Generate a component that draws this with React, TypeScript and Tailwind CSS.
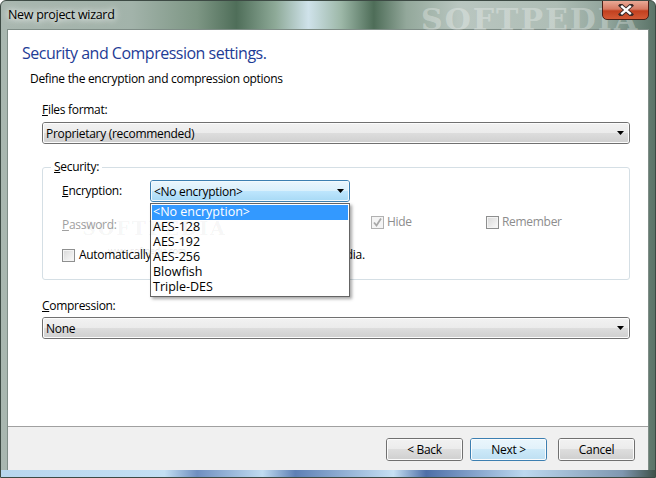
import React from "react";

function Arrow() {
  return (
    <svg width="7" height="4" viewBox="0 0 7 4" className="absolute right-[5px] top-1/2 -translate-y-1/2">
      <polygon points="0,0 7,0 3.5,4" fill="#000" />
    </svg>
  );
}

function Combo({ text, className }: { text: string; className: string }) {
  return (
    <div
      className={`relative h-[22px] rounded-[3px] border border-[#707070] bg-[linear-gradient(180deg,#f2f2f2_0%,#ebebeb_50%,#dddddd_50%,#cfcfcf_100%)] flex items-center pl-[3px] ${className}`}
    >
      <span className="shadow-[inset_0_0_0_1px_#fcfcfc] absolute inset-0 rounded-[2px]" />
      <span className="relative mt-[1px]">{text}</span>
      <Arrow />
    </div>
  );
}

function Check({ checked, disabled }: { checked?: boolean; disabled?: boolean }) {
  return (
    <span
      className={
        disabled
          ? "relative inline-block shrink-0 w-[13px] h-[13px] border border-[#b1b1b1] bg-[#f4f4f4]"
          : "relative inline-block shrink-0 w-[13px] h-[13px] border border-[#8e8f8f] bg-[linear-gradient(135deg,#d8d8d8_0%,#fbfbfb_100%)] shadow-[inset_0_0_0_1px_#f4f4f4]"
      }
    >
      {checked && (
        <svg width="11" height="11" viewBox="0 0 11 11" className="absolute left-0 top-0">
          <path d="M2 5.5 L4.5 8.5 L9 1.5" stroke="#a8a8a8" strokeWidth="1.8" fill="none" />
        </svg>
      )}
    </span>
  );
}

function Button({ text, focused }: { text: string; focused?: boolean }) {
  return (
    <div
      className={
        focused
          ? "relative w-[77px] h-[23px] rounded-[3px] border border-[#3c7fb1] bg-[linear-gradient(180deg,#eaf6fd_0%,#e1f1fa_50%,#cde9f8_50%,#bedff2_100%)] flex items-center justify-center"
          : "relative w-[77px] h-[23px] rounded-[3px] border border-[#707070] bg-[linear-gradient(180deg,#f2f2f2_0%,#ebebeb_50%,#dddddd_50%,#cfcfcf_100%)] flex items-center justify-center"
      }
    >
      <span className="absolute inset-0 rounded-[2px] shadow-[inset_0_0_0_1px_#fbfbfb]" />
      <span className="relative">{text}</span>
    </div>
  );
}

export default function App() {
  const items = ["AES-128", "AES-192", "AES-256", "Blowfish", "Triple-DES"];
  return (
    <div className="relative w-[656px] h-[478px] overflow-hidden rounded-t-[6px] border border-[#3d4a44] bg-[linear-gradient(90deg,#a9b7b0_0%,#a2b3aa_20%,#7d9684_30%,#4f6e59_36%,#8eaa98_42%,#cfe2ea_47%,#9db8a8_52%,#4e6d58_57%,#93a89b_62%,#b9c6c0_70%,#aebdb5_85%,#8fa39a_93%,#5b7468_100%)] font-['Open_Sans','Noto_Sans',sans-serif] text-[12px] tracking-[-0.3px] text-black">
      {/* title bar */}
      <div className="relative h-[28px] flex items-center pl-[7px]">
        <span className="text-[12.5px] [text-shadow:0_0_6px_#ffffff,0_0_10px_#ffffff]">New project wizard</span>
        <span className="absolute left-[420px] top-[-4px] text-[30px] font-bold tracking-[2px] text-white/30 font-['DejaVu_Serif',serif]">SOFTPEDIA</span>
        <div className="absolute right-[6px] top-[-1px] w-[47px] h-[20px] rounded-b-[5px] border border-[#4b1f16] bg-[linear-gradient(180deg,#e9a996_0%,#d67a63_45%,#c2401f_55%,#d35a36_100%)] flex items-center justify-center">
          <svg width="16" height="12" viewBox="0 0 16 12">
            <path d="M3 1.5 L13 10.5 M13 1.5 L3 10.5" stroke="#3a2a28" strokeWidth="4.2" strokeLinecap="square" />
            <path d="M3.2 1.8 L12.8 10.2 M12.8 1.8 L3.2 10.2" stroke="#ffffff" strokeWidth="2.4" />
          </svg>
        </div>
      </div>

      {/* client area */}
      <div className="mx-[6px] h-[442px] border border-[#7f8d87] flex flex-col">
        <div className="relative h-[396px] bg-white flex flex-col">
          <div className="ml-[14px] mt-[12px] text-[16px] leading-[22px] tracking-[-0.5px] text-[#1e3c96]">
            Security and Compression settings.
          </div>
          <div className="ml-[22px] mt-[7px] leading-[16px]">Define the encryption and compression options</div>

          <div className="ml-[34px] mt-[15px] leading-[16px]">
            <span className="underline">F</span>iles format:
          </div>
          <Combo text="Proprietary (recommended)" className="ml-[34px] mt-[4px] w-[588px]" />

          {/* Security group */}
          <div className="relative ml-[34px] mt-[23px] w-[588px] h-[113px] rounded-[3px] border border-[#d5dfe5] flex flex-col">
            <span className="absolute left-[8px] top-[-9px] bg-white px-[3px] leading-[16px]">
              <span className="underline">S</span>ecurity:
            </span>

            <div className="mt-[12px] flex items-center">
              <span className="ml-[19px] w-[88px] leading-[16px]">
                <span className="underline">E</span>ncryption:
              </span>
              <div className="relative w-[200px] h-[22px] rounded-[3px] border border-[#3c7fb1] bg-[linear-gradient(180deg,#eaf6fd_0%,#d9f0fc_50%,#bee6fd_50%,#a7d9f5_100%)] flex items-center pl-[3px]">
                <span className="absolute inset-0 rounded-[2px] shadow-[inset_0_0_0_1px_#f2fafe]" />
                <span className="relative mt-[1px]">&lt;No encryption&gt;</span>
                <Arrow />
              </div>
            </div>

            <div className="mt-[10px] h-[22px] flex items-center">
              <span className="ml-[19px] w-[88px] leading-[16px] text-[#a0a0a0] mt-[3px]">
                <span className="underline">P</span>assword:
              </span>
              <div className="w-[200px] h-[22px]" />
              <div className="ml-[21px] w-[115px] flex items-center gap-[3px] text-[#8d8d8d] -mt-[2px]">
                <Check checked disabled />
                <span>Hide</span>
              </div>
              <div className="flex items-center gap-[3px] text-[#8d8d8d] -mt-[2px]">
                <Check />
                <span>Remember</span>
              </div>
            </div>

            <div className="mt-[13px] ml-[19px] flex items-center gap-[4px] leading-[16px]">
              <Check />
              <span>Automatically use the password for removable media.</span>
            </div>

            {/* dropdown list overlay */}
            <div className="absolute left-[107px] top-[35px] w-[200px] h-[94px] border border-[#646464] bg-white flex flex-col pt-[1px] px-[1px] shadow-[2px_2px_3px_rgba(0,0,0,0.35)] z-10 tracking-normal">
              <div className="h-[15px] bg-[#3399ff] text-white flex items-center pl-[1px] text-[12.5px]">&lt;No encryption&gt;</div>
              {items.map((it) => (
                <div key={it} className="h-[15px] flex items-center pl-[1px] text-[12.5px]">
                  {it}
                </div>
              ))}
            </div>
          </div>

          <div className="ml-[34px] mt-[18px] leading-[16px]">
            <span className="underline">C</span>ompression:
          </div>
          <Combo text="None" className="ml-[34px] mt-[3px] w-[588px]" />

          {/* watermark */}
          <span className="absolute left-[74px] top-[184px] text-[19px] font-bold tracking-[2px] text-black/[0.05] font-['DejaVu_Serif',serif] z-20">SOFTPEDIA</span>
          <span className="absolute left-[100px] top-[214px] text-[9px] text-black/[0.12] z-20">www.softpedia.com</span>
        </div>
        <div className="h-[1px] bg-[#a0a0a0]" />
        <div className="flex-1 bg-[#f0f0f0] flex justify-end items-start pt-[11px] pr-[13px]">
          <Button text="< Back" />
          <div className="ml-[7px]">
            <Button text="Next >" focused />
          </div>
          <div className="ml-[11px]">
            <Button text="Cancel" />
          </div>
        </div>
      </div>
      {/* bottom frame */}
      <div className="absolute left-0 right-0 bottom-0 h-[7px] bg-[linear-gradient(90deg,#b8d6ee_0%,#c3dff3_25%,#6f8fc0_30%,#c0dcf1_40%,#5e80b5_45%,#c6e0f3_60%,#4e6fa8_65%,#bcd8ef_80%,#7f97b0_95%,#40524a_100%)]" />
    </div>
  );
}
